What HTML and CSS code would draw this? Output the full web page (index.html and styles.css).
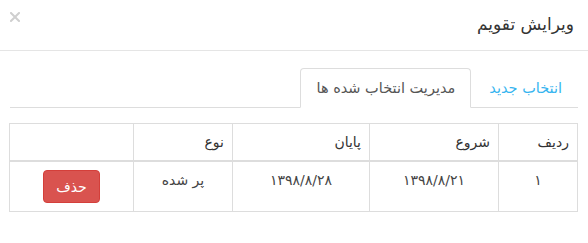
FILE: index.html
```html
<!DOCTYPE html>
<html lang="fa" dir="rtl">
<head>
<meta charset="utf-8">
<title>ویرایش تقویم</title>
<link rel="stylesheet" href="styles.css">
</head>
<body>
<div class="modal">
  <div class="modal-header">
    <h4 class="modal-title">ویرایش تقویم</h4>
    <button class="close" type="button" aria-label="بستن">
      <svg width="10" height="10" viewBox="0 0 10 10"><path d="M1 1L9 9M9 1L1 9" stroke="#cfcfcf" stroke-width="2" stroke-linecap="square"/></svg>
    </button>
  </div>
  <div class="modal-body">
    <ul class="tabs">
      <li class="tab"><a class="tab-link">انتخاب جدید</a></li>
      <li class="tab active"><a class="tab-link">مدیریت انتخاب شده ها</a></li>
    </ul>
    <table class="grid">
      <colgroup>
        <col class="c-row"><col class="c-start"><col class="c-end"><col class="c-type"><col class="c-act">
      </colgroup>
      <thead>
        <tr><th>ردیف</th><th>شروع</th><th>پایان</th><th>نوع</th><th></th></tr>
      </thead>
      <tbody>
        <tr><td>۱</td><td>۱۳۹۸/۸/۲۱</td><td>۱۳۹۸/۸/۲۸</td><td>پر شده</td><td><button class="btn-danger" type="button">حذف</button></td></tr>
      </tbody>
    </table>
  </div>
</div>
</body>
</html>
```
FILE: styles.css
```css
html, body {
  margin: 0;
  padding: 0;
  background: #fff;
}
body {
  font-family: "DejaVu Sans", sans-serif;
  font-size: 14px;
  color: #333;
}
.modal {
  width: 588px;
}
.modal-header {
  display: flex;
  align-items: flex-start;
  justify-content: space-between;
  height: 51px;
  box-sizing: border-box;
  border-bottom: 1px solid #e5e5e5;
  padding: 0 14px 0 10px;
}
.modal-title {
  margin: 12px 0 0 0;
  font-size: 17px;
  font-weight: normal;
  line-height: 24px;
  color: #333;
}
.close {
  margin-top: 12px;
  padding: 0;
  border: 0;
  background: none;
  width: 10px;
  height: 10px;
  line-height: 0;
}
.modal-body {
  padding: 17px 10px 0 10px;
}
.tabs {
  list-style: none;
  margin: 0;
  padding: 0;
  display: flex;
  height: 39px;
  border-bottom: 1px solid #ddd;
}
.tab {
  margin-left: 2px;
  height: 40px;
}
.tab-link {
  display: flex;
  align-items: center;
  height: 40px;
  box-sizing: border-box;
  padding: 0 15px;
  border: 1px solid transparent;
  border-radius: 4px 4px 0 0;
  font-size: 14.5px;
  color: #35b4ef;
}
.tab.active .tab-link {
  border-color: #ddd;
  border-bottom-color: #fff;
  background: #fff;
  color: #555;
}
.grid {
  margin-top: 15px;
  width: 568px;
  border-collapse: collapse;
  table-layout: fixed;
  border: 1px solid #ddd;
}
.c-row { width: 79px; }
.c-start { width: 129px; }
.c-end { width: 137px; }
.c-type { width: 99px; }
.c-act { width: 124px; }
.grid th {
  text-align: right;
  font-weight: normal;
  padding: 8px;
  line-height: 20px;
  border: 1px solid #ddd;
  border-bottom: 2px solid #ddd;
}
.grid td {
  text-align: center;
  vertical-align: top;
  padding: 8px;
  line-height: 20px;
  border: 1px solid #ddd;
  color: #444;
}
.btn-danger {
  font-family: inherit;
  font-size: 14px;
  color: #fff;
  background: #d9534f;
  border: 1px solid #d43f3a;
  border-radius: 4px;
  height: 33px;
  padding: 0 12px;
  line-height: 20px;
  cursor: pointer;
}
```
